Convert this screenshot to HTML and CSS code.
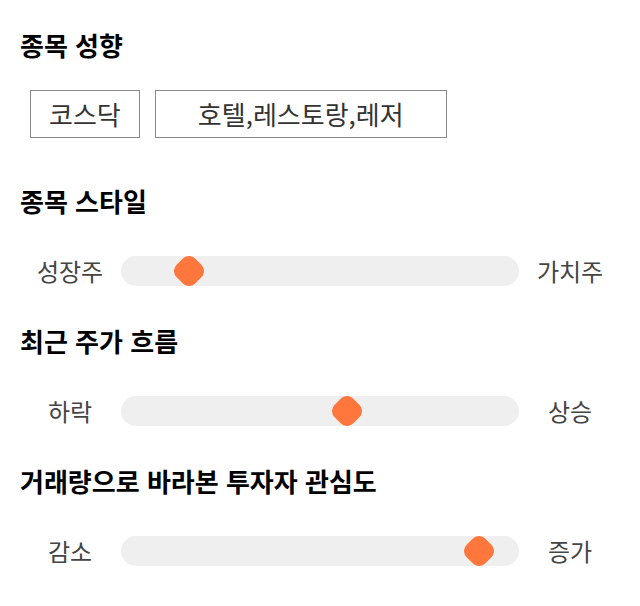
FILE: index.html
```html
<!DOCTYPE html>
<html lang="ko">
<head>
<meta charset="utf-8">
<link rel="stylesheet" href="styles.css">
</head>
<body>
<div class="page">
  <section class="block">
    <h2 class="title">종목 성향</h2>
    <div class="chips">
      <div class="chip">코스닥</div>
      <div class="chip chip-wide">호텔,레스토랑,레저</div>
    </div>
  </section>

  <section class="block">
    <h2 class="title">종목 스타일</h2>
    <div class="slider-row">
      <span class="label">성장주</span>
      <div class="track">
        <svg class="thumb" style="left:53px" width="30" height="30" viewBox="0 0 30 30"><rect x="1.75" y="1.75" width="26.5" height="26.5" rx="9" transform="rotate(45 15 15)" fill="#ff773d"/></svg>
      </div>
      <span class="label">가치주</span>
    </div>
  </section>

  <section class="block">
    <h2 class="title">최근 주가 흐름</h2>
    <div class="slider-row">
      <span class="label">하락</span>
      <div class="track">
        <svg class="thumb" style="left:211px" width="30" height="30" viewBox="0 0 30 30"><rect x="1.75" y="1.75" width="26.5" height="26.5" rx="9" transform="rotate(45 15 15)" fill="#ff773d"/></svg>
      </div>
      <span class="label">상승</span>
    </div>
  </section>

  <section class="block">
    <h2 class="title">거래량으로 바라본 투자자 관심도</h2>
    <div class="slider-row">
      <span class="label">감소</span>
      <div class="track">
        <svg class="thumb" style="left:343px" width="30" height="30" viewBox="0 0 30 30"><rect x="1.75" y="1.75" width="26.5" height="26.5" rx="9" transform="rotate(45 15 15)" fill="#ff773d"/></svg>
      </div>
      <span class="label">증가</span>
    </div>
  </section>
</div>
</body>
</html>
```

FILE: styles.css
```css
* { box-sizing: border-box; }
html, body {
  margin: 0;
  padding: 0;
  background: #fff;
}
body {
  font-family: "Noto Sans CJK KR", "Noto Sans", sans-serif;
  color: #000;
}
.page {
  padding: 28px 20px 0 20px;
  display: flex;
  flex-direction: column;
}
.block {
  display: flex;
  flex-direction: column;
}
.block + .block {
  margin-top: 38px;
}
.block:nth-child(2) {
  margin-top: 46px;
}
.title {
  margin: 0;
  font-size: 26px;
  font-weight: 700;
  line-height: 34px;
  color: #000;
}
.chips {
  display: flex;
  gap: 15px;
  margin: 28px 0 0 10px;
}
.chip {
  height: 48px;
  border: 1px solid #888;
  padding: 0 18px;
  font-size: 26px;
  color: #333;
  display: flex;
  align-items: center;
  justify-content: center;
  line-height: 1;
}
.chip-wide {
  width: 292px;
  padding: 0;
}
.slider-row {
  display: grid;
  grid-template-columns: 100px 1fr 100px;
  align-items: center;
  height: 30px;
  margin-top: 38px;
}
.label {
  text-align: center;
  font-size: 24px;
  color: #444;
  line-height: 30px;
}
.track {
  position: relative;
  height: 30px;
  background: #efefef;
  border-radius: 15px;
  margin: 0 1px;
}
.thumb {
  position: absolute;
  top: 0;
  display: block;
}
```
